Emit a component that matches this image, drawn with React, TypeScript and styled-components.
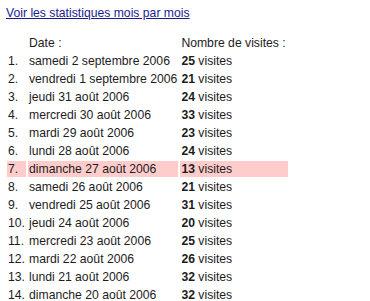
import React from "react";
import styled, { createGlobalStyle } from "styled-components";

const Global = createGlobalStyle`
  html, body { margin: 0; padding: 0; background: #ffffff; }
  body { font-family: "Liberation Sans", Arial, Helvetica, sans-serif; font-size: 12.2px; color: #1c1c1c; }
`;

const Page = styled.div`
  padding: 6px 5px 0 5px;
`;

const MonthLink = styled.a`
  display: inline-block;
  margin-left: 1px;
  color: #1b1b8f;
  text-decoration: underline;
  line-height: 15px;
`;

const Table = styled.table`
  margin-top: 12px;
  border-collapse: separate;
  border-spacing: 2px;
  font-size: 12.2px;
`;

const Row = styled.tr<{ $hl?: boolean }>`
  background: ${(p) => (p.$hl ? "#ffcccc" : "transparent")};
`;

const HeadCell = styled.th<{ $w: number }>`
  width: ${(p) => p.$w}px;
  padding: 0 1px;
  height: 16px;
  line-height: 16px;
  font-weight: normal;
  text-align: left;
  white-space: nowrap;
`;

const Cell = styled.td`
  padding: 0 1px;
  height: 16px;
  line-height: 16px;
  white-space: nowrap;
  text-align: left;
`;

const Count = styled.b`
  font-weight: bold;
`;

const rows: [string, number][] = [
  ["samedi 2 septembre 2006", 25],
  ["vendredi 1 septembre 2006", 21],
  ["jeudi 31 août 2006", 24],
  ["mercredi 30 août 2006", 33],
  ["mardi 29 août 2006", 23],
  ["lundi 28 août 2006", 24],
  ["dimanche 27 août 2006", 13],
  ["samedi 26 août 2006", 21],
  ["vendredi 25 août 2006", 31],
  ["jeudi 24 août 2006", 20],
  ["mercredi 23 août 2006", 25],
  ["mardi 22 août 2006", 26],
  ["lundi 21 août 2006", 32],
  ["dimanche 20 août 2006", 32],
];

export default function App() {
  return (
    <Page>
      <Global />
      <MonthLink href="#">Voir les statistiques mois par mois</MonthLink>
      <Table>
        <thead>
          <Row>
            <HeadCell $w={17}></HeadCell>
            <HeadCell $w={148}>Date :</HeadCell>
            <HeadCell $w={106}>Nombre de visites :</HeadCell>
          </Row>
        </thead>
        <tbody>
          {rows.map(([d, n], i) => (
            <Row key={i} $hl={i === 6}>
              <Cell>{i + 1}.</Cell>
              <Cell>{d}</Cell>
              <Cell>
                <Count>{n}</Count> visites
              </Cell>
            </Row>
          ))}
        </tbody>
      </Table>
    </Page>
  );
}
